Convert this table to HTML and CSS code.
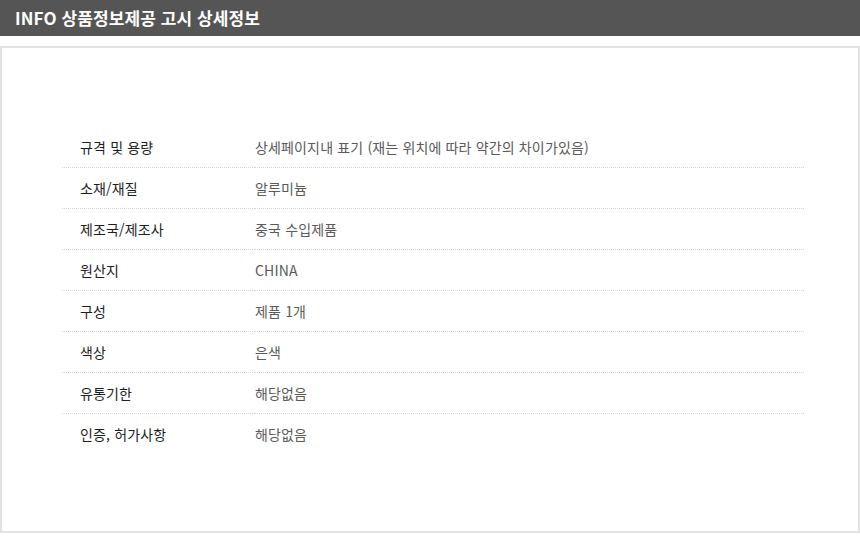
FILE: index.html
```html
<!DOCTYPE html>
<html lang="ko">
<head>
<meta charset="utf-8">
<link rel="stylesheet" href="styles.css">
</head>
<body>
<div class="header">INFO 상품정보제공 고시 상세정보</div>
<div class="box">
  <table class="info">
    <tr><th>규격 및 용량</th><td>상세페이지내 표기 (재는 위치에 따라 약간의 차이가있음)</td></tr>
    <tr><th>소재/재질</th><td>알루미늄</td></tr>
    <tr><th>제조국/제조사</th><td>중국 수입제품</td></tr>
    <tr><th>원산지</th><td>CHINA</td></tr>
    <tr><th>구성</th><td>제품 1개</td></tr>
    <tr><th>색상</th><td>은색</td></tr>
    <tr><th>유통기한</th><td>해당없음</td></tr>
    <tr class="last"><th>인증, 허가사항</th><td>해당없음</td></tr>
  </table>
</div>
</body>
</html>
```
FILE: styles.css
```css
html, body {
  margin: 0;
  padding: 0;
  background: #fff;
  font-family: "Noto Sans CJK KR", "Noto Sans", sans-serif;
}
.header {
  height: 36px;
  line-height: 36px;
  background: #555555;
  color: #fff;
  font-size: 17px;
  font-weight: bold;
  padding-left: 15px;
  letter-spacing: 0.1px;
}
.box {
  margin-top: 10px;
  width: 860px;
  box-sizing: border-box;
  height: 487px;
  border: 2px solid #e2e2e2;
  padding: 79px 54px 0 60px;
}
.info {
  width: 742px;
  border-collapse: collapse;
  font-size: 14px;
}
.info th, .info td {
  height: 40px;
  padding: 0;
  text-align: left;
  vertical-align: middle;
  border-bottom: 1px dotted #d6d6d6;
  font-weight: normal;
  letter-spacing: 0.15px;
}
.info th {
  width: 193px;
  padding-left: 18px;
  color: #1e1e1e;
  box-sizing: border-box;
}
.info td {
  color: #5a5a5a;
}
.info tr.last th, .info tr.last td {
  border-bottom: none;
}
```
